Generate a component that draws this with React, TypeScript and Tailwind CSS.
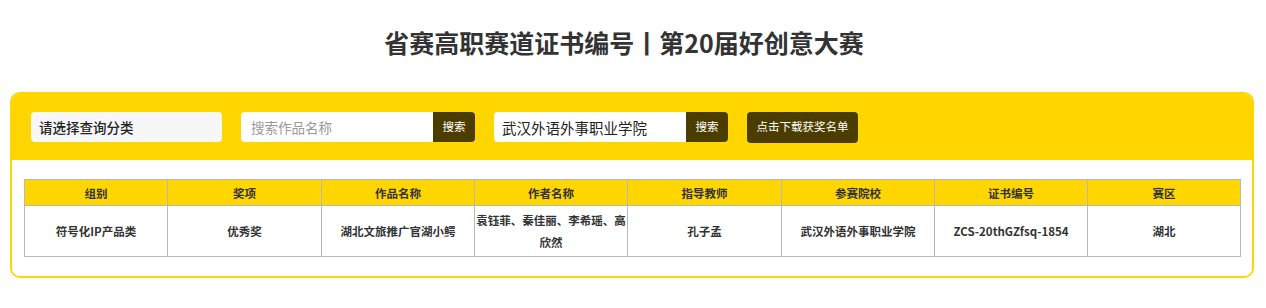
import React from 'react';

const font = { fontFamily: '"Noto Sans CJK SC", "Noto Sans", sans-serif' };

const columns = [
  { title: '组别', width: 'w-[143px]' },
  { title: '奖项', width: 'w-[154px]' },
  { title: '作品名称', width: 'w-[153px]' },
  { title: '作者名称', width: 'w-[153px]' },
  { title: '指导教师', width: 'w-[154px]' },
  { title: '参赛院校', width: 'w-[153px]' },
  { title: '证书编号', width: 'w-[153px]' },
  { title: '赛区', width: 'w-[153px]' },
];

const row = [
  '符号化IP产品类',
  '优秀奖',
  '湖北文旅推广官湖小鳄',
  '袁钰菲、秦佳丽、李希瑶、高欣然',
  '孔子孟',
  '武汉外语外事职业学院',
  'ZCS-20thGZfsq-1854',
  '湖北',
];

const App: React.FC = () => {
  return (
    <div className="w-[1266px] h-[308px] bg-white text-[#333]" style={font}>
      <h1 className="pt-[25px] pr-[18px] h-[92px] text-center text-[25px] leading-[34px] font-bold text-[#333]">
        省赛高职赛道证书编号丨第20届好创意大赛
      </h1>

      <div className="ml-[10px] w-[1244px] border-2 border-[#ffd600] rounded-[10px] overflow-hidden">
        <div className="bg-[#ffd600] h-[66px] px-[19px] flex items-center gap-[19px]">
          <div className="w-[191px] h-[30px] bg-[#f7f7f7] rounded-[4px] flex items-center px-[8px] text-[13.5px] font-medium text-[#222]">
            请选择查询分类
          </div>

          <div className="flex h-[30px]">
            <input
              className="w-[192px] h-full bg-white rounded-l-[4px] px-[10px] text-[13.5px] outline-none placeholder:text-[#999]"
              placeholder="搜索作品名称"
            />
            <button className="w-[42px] h-full bg-[#4b3d00] text-white text-[11.5px] rounded-r-[4px]">
              搜索
            </button>
          </div>

          <div className="flex h-[30px]">
            <input
              className="w-[192px] h-full bg-white rounded-l-[4px] px-[8px] text-[14.5px] text-[#222] outline-none"
              defaultValue="武汉外语外事职业学院"
            />
            <button className="w-[42px] h-full bg-[#4b3d00] text-white text-[11.5px] rounded-r-[4px]">
              搜索
            </button>
          </div>

          <button className="w-[111px] h-[31px] bg-[#4b3d00] text-white text-[11.5px] rounded-[4px]">
            点击下载获奖名单
          </button>
        </div>

        <div className="bg-white pt-[19px] pb-[19px] px-[12px]">
          <table className="w-[1216px] table-fixed border-collapse text-[11.5px] font-bold text-[#333]">
            <colgroup>
              {columns.map((c) => (
                <col key={c.title} className={c.width} />
              ))}
            </colgroup>
            <thead>
              <tr className="bg-[#ffd600] h-[26px]">
                {columns.map((c) => (
                  <th key={c.title} className="border border-[#b8b8b8] font-bold leading-[20px]">
                    {c.title}
                  </th>
                ))}
              </tr>
            </thead>
            <tbody>
              <tr className="h-[51px]">
                {row.map((v, i) => (
                  <td key={i} className="border border-[#b8b8b8] text-center leading-[22px] px-px">
                    {v}
                  </td>
                ))}
              </tr>
            </tbody>
          </table>
        </div>
      </div>
    </div>
  );
};

export default App;
